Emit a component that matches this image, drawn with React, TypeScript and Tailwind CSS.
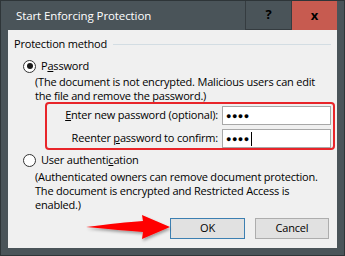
import React from "react";

const Radio = ({ checked }: { checked?: boolean }) => (
  <span className="flex h-[13px] w-[13px] shrink-0 items-center justify-center rounded-full border border-[#333333] bg-white">
    {checked && <span className="h-[6px] w-[6px] rounded-full bg-[#1a1a1a]" />}
  </span>
);

const PasswordField = ({ cursor }: { cursor?: boolean }) => (
  <div className="flex h-[19px] w-[109px] items-center border border-[#a8a8a8] bg-white pl-[3px]">
    <span className="text-[9px] leading-none tracking-[0.5px] text-black">●●●●</span>
    {cursor && <span className="ml-[1px] h-[14px] w-px bg-black" />}
  </div>
);

const App = () => {
  return (
    <div
      className="relative flex h-[256px] w-[345px] flex-col whitespace-nowrap border border-[#2e3538] bg-[#4a5459] text-[11px] tracking-[-0.2px] text-black"
      style={{ fontFamily: '"Open Sans", "Noto Sans", sans-serif' }}
    >
      {/* title bar */}
      <div className="flex h-[29px] shrink-0 items-stretch">
        <div className="flex flex-1 items-center pl-[15px] text-[11.5px] tracking-[-0.1px] text-white">
          Start Enforcing Protection
        </div>
        <div className="flex w-[47px] items-center justify-center border-x border-b border-[#353c40] text-[13px] font-bold">
          ?
        </div>
        <div className="flex w-[45px] items-center justify-center bg-[#c75b50] text-[13px] font-bold">
          x
        </div>
        <div className="w-[7px]" />
      </div>

      {/* content */}
      <div className="mx-[7px] mb-[7px] flex flex-1 flex-col bg-[#f0f0f0] pl-[6px]">
        <div className="mt-[6px] flex h-[16px] items-center">
          <span>Protection method</span>
          <span className="ml-[6px] mr-[6px] h-px flex-1 bg-[#d3dde3]" />
        </div>

        <div className="mt-[6px] flex h-[16px] items-center pl-[9px]">
          <Radio checked />
          <span className="ml-[5px]">
            P<u>a</u>ssword
          </span>
        </div>
        <div className="mt-[1px] pl-[21px] leading-[14px]">
          (The document is not encrypted. Malicious users can edit
          <br />
          the file and remove the password.)
        </div>

        <div className="mt-[-1px] ml-[31px] mr-[2px] flex flex-col gap-[4px] rounded-[4px] border-2 border-[#e8252a] pt-[2px] pr-[2px]">
          <div className="flex items-center justify-end gap-[4px]">
            <span>
              <u>E</u>nter new password (optional):
            </span>
            <PasswordField />
          </div>
          <div className="flex items-center justify-end gap-[4px]">
            <span>
              Reenter <u>p</u>assword to confirm:
            </span>
            <PasswordField cursor />
          </div>
        </div>

        <div className="mt-[2px] flex h-[16px] items-center pl-[9px]">
          <Radio />
          <span className="ml-[5px]">
            User authenti<u>c</u>ation
          </span>
        </div>
        <div className="mt-[2px] pl-[21px] leading-[14px]">
          (Authenticated owners can remove document protection.
          <br />
          The document is encrypted and Restricted Access is
          <br />
          enabled.)
        </div>

        <div className="mt-[6px] flex justify-end gap-[10px] pr-[8px]">
          <button className="flex h-[21px] w-[75px] items-center justify-center border border-[#3c7fb1] bg-[#e1e1e1]">
            OK
          </button>
          <button className="flex h-[21px] w-[74px] items-center justify-center border border-[#adadad] bg-[#e1e1e1]">
            Cancel
          </button>
        </div>
      </div>

      {/* red annotation arrow */}
      <svg
        className="absolute left-[79px] top-[207px]"
        width="100"
        height="40"
        viewBox="0 0 100 40"
      >
        <defs>
          <filter id="sh" x="-20%" y="-30%" width="140%" height="170%">
            <feDropShadow dx="1" dy="2" stdDeviation="1.5" floodColor="#000" floodOpacity="0.35" />
          </filter>
        </defs>
        <path
          d="M6 19 C 30 16, 48 14, 63 13 L 62 7 L 90 19 L 62 31 L 63 24 C 48 23, 30 21, 6 19 Z"
          fill="#ff0000"
          filter="url(#sh)"
        />
      </svg>
    </div>
  );
};

export default App;
